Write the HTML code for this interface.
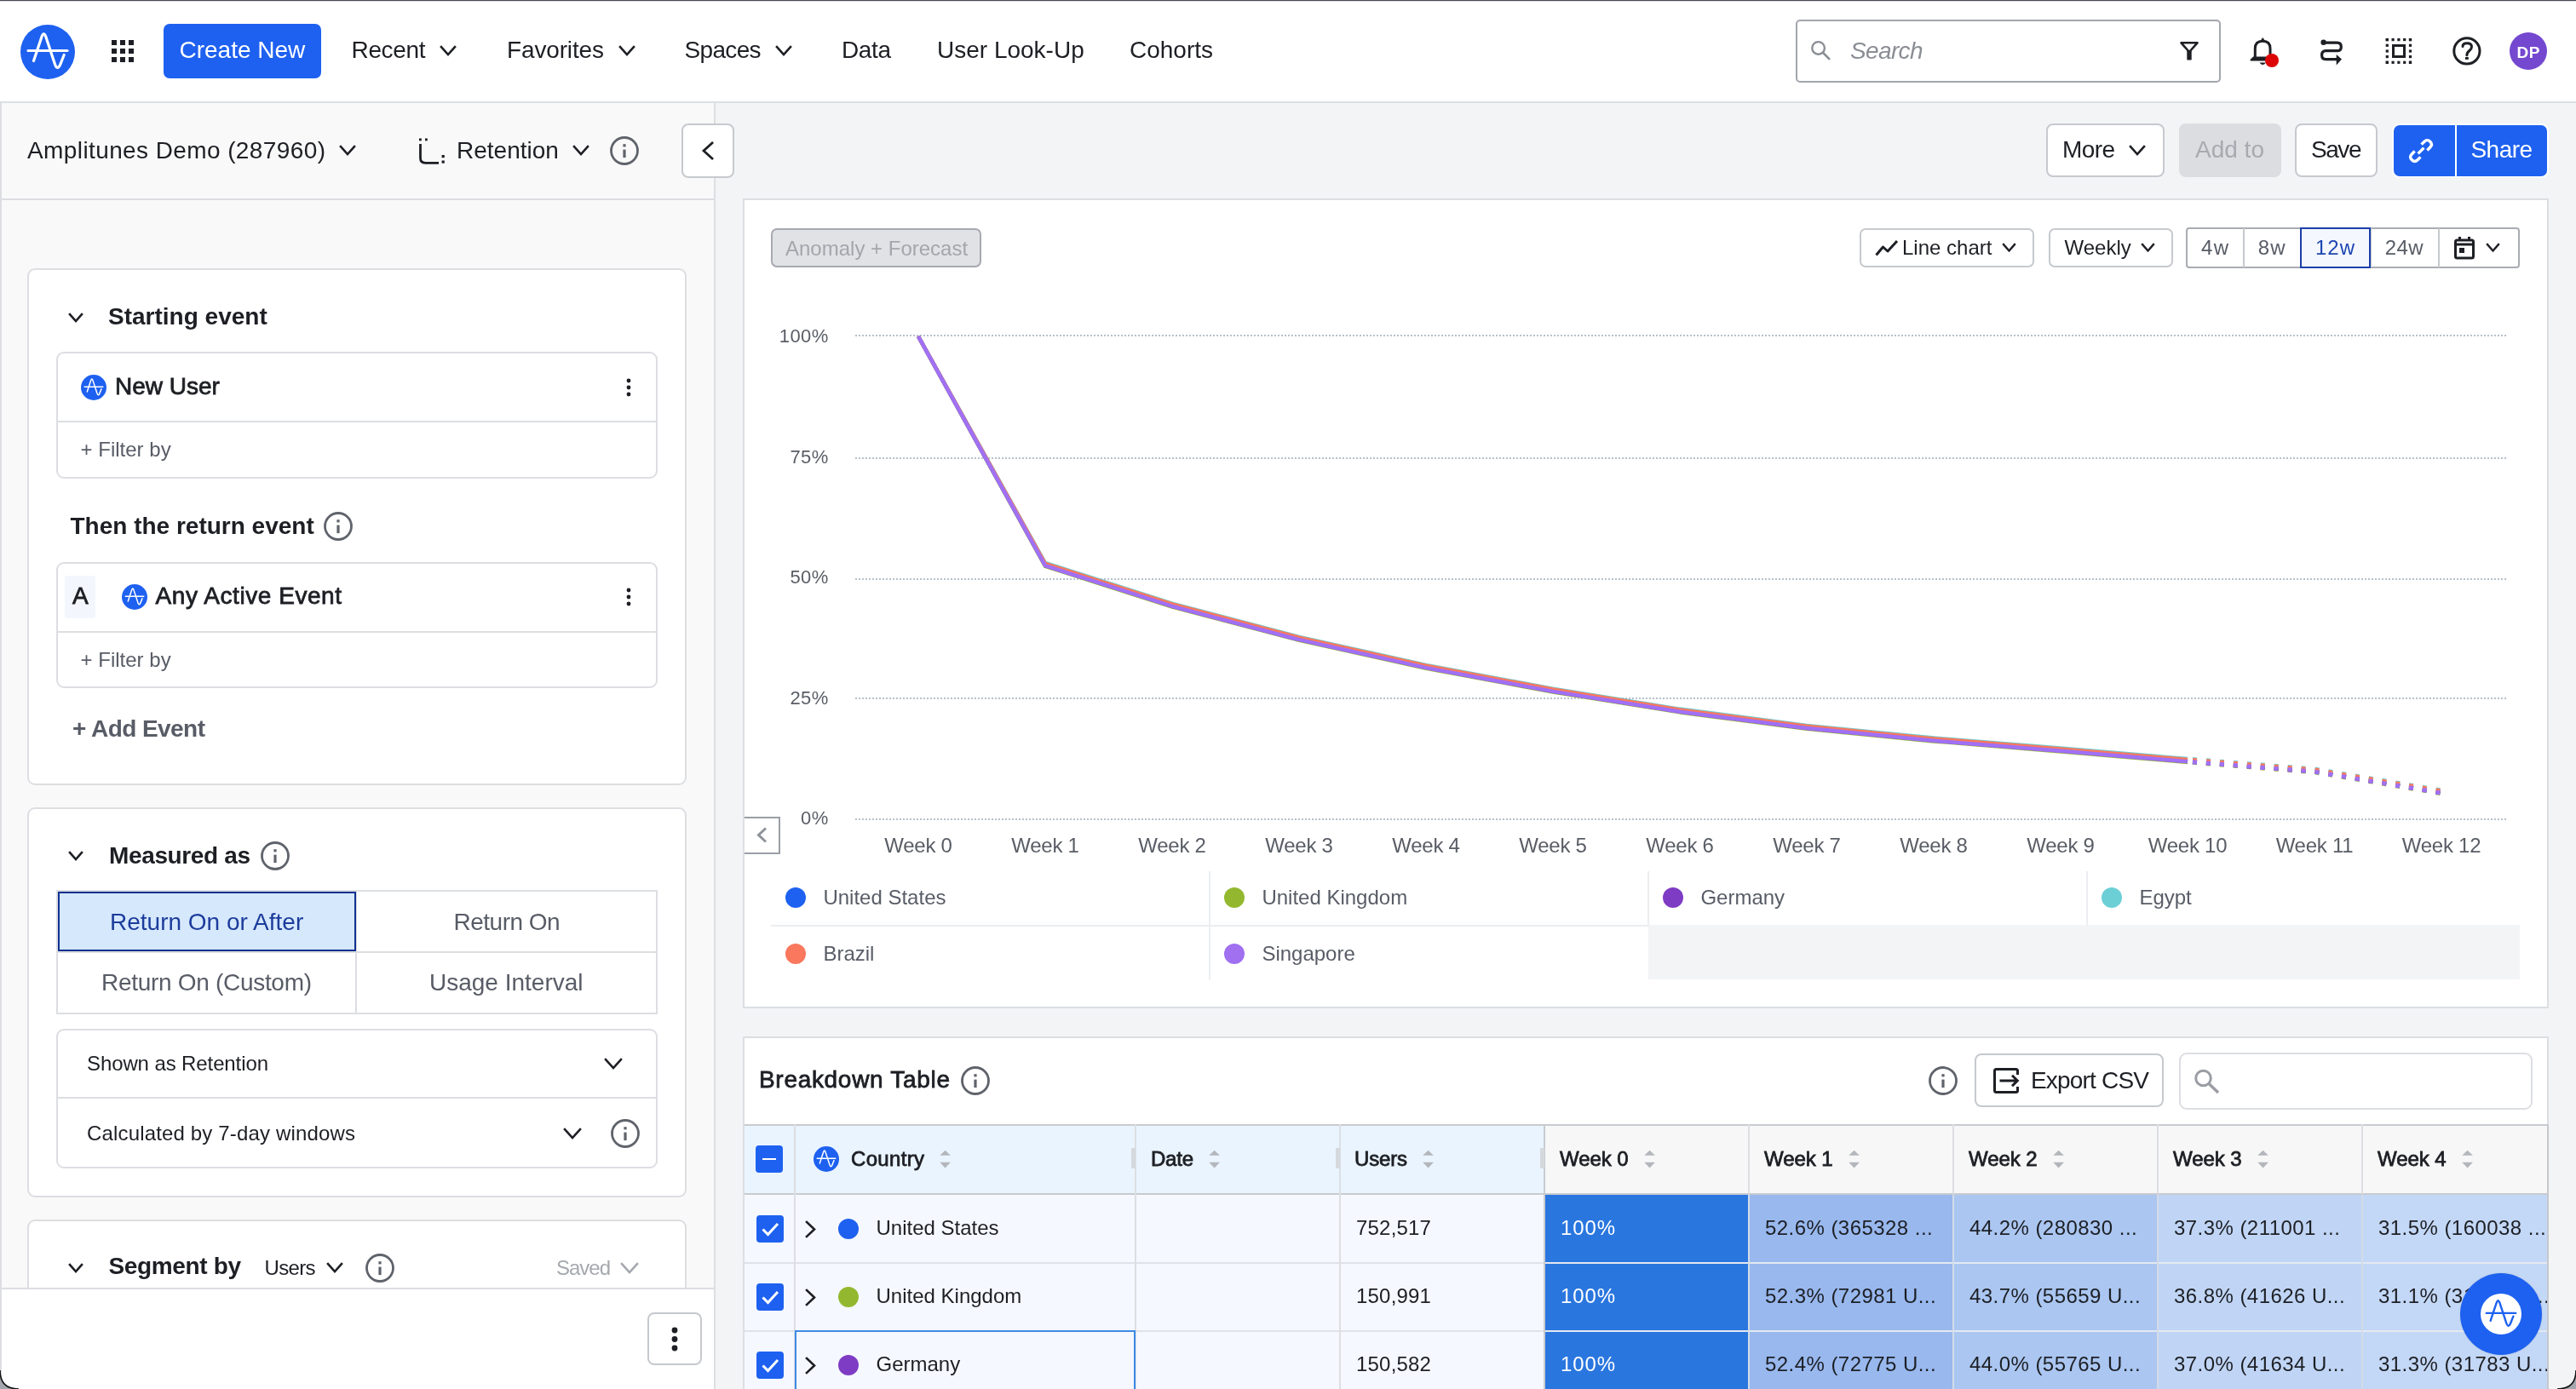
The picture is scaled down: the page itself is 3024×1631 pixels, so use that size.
<!DOCTYPE html><html><head><meta charset="utf-8"><style>
html,body{margin:0;padding:0;}
body{width:3024px;height:1631px;position:relative;overflow:hidden;background:#fff;font-family:"Liberation Sans", sans-serif;}
.t{position:absolute;line-height:1;white-space:nowrap;}
.m{-webkit-text-stroke:0.8px currentColor;}
svg{overflow:visible}
</style></head><body>
<div style="position:absolute;left:0;top:0;width:3024px;height:1631px;will-change:transform;">
<div style="position:absolute;left:0px;top:121px;width:838px;height:1510px;background:#f9f9f9;"></div>
<div style="position:absolute;left:840px;top:121px;width:2184px;height:1510px;background:#f3f4f6;"></div>
<div style="position:absolute;left:838px;top:121px;width:2px;height:1510px;background:#dcdee2;"></div>
<div style="position:absolute;left:0px;top:121px;width:2px;height:1510px;background:#dcdee2;"></div>
<div style="position:absolute;left:0px;top:233px;width:838px;height:2px;background:#dcdee2;"></div>
<div style="position:absolute;left:0px;top:0px;width:3024px;height:1px;background:#454857;"></div>
<div style="position:absolute;left:0px;top:1px;width:3024px;height:1px;background:#dcdde1;"></div>
<div style="position:absolute;left:0px;top:119px;width:3024px;height:2px;background:#dcdee2;"></div>
<svg style="position:absolute;left:24.0px;top:29.0px;" width="64" height="64" viewBox="0 0 64 64"><circle cx="32" cy="32" r="32" fill="#1e61f0"/><path d="M9 30.5 H55" stroke="#fff" stroke-width="3.2" fill="none" stroke-linecap="round"/><path d="M15.5 42.5 L25.2 13.5 Q27.3 8.2 29.6 13.6 L40.6 46.8 Q43.6 54.2 46.8 46.6 L51.2 35.5" stroke="#fff" stroke-width="3.2" fill="none" stroke-linecap="round" stroke-linejoin="round"/></svg>
<div style="position:absolute;left:131px;top:47px;width:6px;height:6px;background:#1d1f24;"></div>
<div style="position:absolute;left:131px;top:57px;width:6px;height:6px;background:#1d1f24;"></div>
<div style="position:absolute;left:131px;top:67px;width:6px;height:6px;background:#1d1f24;"></div>
<div style="position:absolute;left:141px;top:47px;width:6px;height:6px;background:#1d1f24;"></div>
<div style="position:absolute;left:141px;top:57px;width:6px;height:6px;background:#1d1f24;"></div>
<div style="position:absolute;left:141px;top:67px;width:6px;height:6px;background:#1d1f24;"></div>
<div style="position:absolute;left:151px;top:47px;width:6px;height:6px;background:#1d1f24;"></div>
<div style="position:absolute;left:151px;top:57px;width:6px;height:6px;background:#1d1f24;"></div>
<div style="position:absolute;left:151px;top:67px;width:6px;height:6px;background:#1d1f24;"></div>
<div style="position:absolute;left:192px;top:28px;width:185px;height:64px;background:#1e61f0;border-radius:7px;"></div>
<div class="t" style="left:210.5px;top:45.3px;font-size:28px;color:#fff;">Create New</div>
<div class="t" style="left:412.5px;top:45.3px;font-size:28px;color:#1d1f24;letter-spacing:-0.344px;">Recent</div>
<svg style="position:absolute;left:514.5px;top:52.2px;" width="22" height="15" viewBox="0 0 22 15"><polyline points="3,3 11.0,12 19,3" fill="none" stroke="#1d1f24" stroke-width="2.6" stroke-linecap="square"/></svg>
<div class="t" style="left:595.0px;top:45.3px;font-size:28px;color:#1d1f24;letter-spacing:-0.145px;">Favorites</div>
<svg style="position:absolute;left:724.6px;top:52.2px;" width="22" height="15" viewBox="0 0 22 15"><polyline points="3,3 11.0,12 19,3" fill="none" stroke="#1d1f24" stroke-width="2.6" stroke-linecap="square"/></svg>
<div class="t" style="left:803.6px;top:45.3px;font-size:28px;color:#1d1f24;letter-spacing:-0.681px;">Spaces</div>
<svg style="position:absolute;left:908.7px;top:52.2px;" width="22" height="15" viewBox="0 0 22 15"><polyline points="3,3 11.0,12 19,3" fill="none" stroke="#1d1f24" stroke-width="2.6" stroke-linecap="square"/></svg>
<div class="t" style="left:988.0px;top:45.3px;font-size:28px;color:#1d1f24;letter-spacing:-0.385px;">Data</div>
<div class="t" style="left:1100.0px;top:45.3px;font-size:28px;color:#1d1f24;">User Look-Up</div>
<div class="t" style="left:1326.0px;top:45.3px;font-size:28px;color:#1d1f24;">Cohorts</div>
<div style="position:absolute;left:2108px;top:23px;width:499px;height:74px;box-sizing:border-box;border:2px solid #a3a6ad;border-radius:5px;background:#fff;"></div>
<svg style="position:absolute;left:2110px;top:30px;" width="60" height="60" viewBox="2110 30 60 60"><circle cx="2134.6" cy="56.4" r="7.3" fill="none" stroke="#8a8d94" stroke-width="2.4"/><path d="M2140.2 62 L2148 69.8" stroke="#8a8d94" stroke-width="2.6"/></svg>
<div class="t" style="left:2172.0px;top:45.9px;font-size:28px;color:#8a8d94;font-style:italic;letter-spacing:-0.644px;">Search</div>
<svg style="position:absolute;left:2550px;top:40px;" width="40" height="40" viewBox="2550 40 40 40"><path d="M2560.5 50.3 H2579.5 L2570 61 Z" fill="none" stroke="#1d1f24" stroke-width="2.6" stroke-linejoin="round"/><rect x="2567.3" y="59.5" width="5.4" height="11" rx="0.8" fill="#1d1f24"/></svg>
<svg style="position:absolute;left:2635px;top:38px;" width="50" height="45" viewBox="2635 38 50 45"><path d="M2647.3 69.5 V57 Q2647.3 48.2 2656.2 48.2 Q2665 48.2 2665 57 V69.5" fill="none" stroke="#1d1f24" stroke-width="3"/><path d="M2642.5 70.5 L2645.5 67.5 H2667 L2670 70.5 Z" fill="#1d1f24" stroke="#1d1f24" stroke-width="2" stroke-linejoin="round"/><path d="M2652.5 73.5 Q2656.2 78.5 2660 73.5 Z" fill="#1d1f24"/><path d="M2653.5 48 L2656.2 44 L2659 48 Z" fill="#1d1f24"/></svg>
<div style="position:absolute;left:2659px;top:63px;width:16px;height:16px;background:#dd0606;border-radius:50%;"></div>
<svg style="position:absolute;left:2715px;top:40px;" width="45" height="42" viewBox="2715 40 45 42"><circle cx="2727.6" cy="49.8" r="3.2" fill="#1d1f24"/><path d="M2727.6 50.1 H2743.6 Q2748.3 50.1 2748.3 54.9 Q2748.3 59.7 2743.6 59.7 H2730.4 Q2725.6 59.7 2725.6 64.7 Q2725.6 69.6 2730.4 69.6 H2744" fill="none" stroke="#1d1f24" stroke-width="3.2"/><path d="M2742.7 64 L2749 69.6 L2742.7 76.5 Z" fill="#1d1f24"/></svg>
<svg style="position:absolute;left:2795px;top:40px;" width="42" height="42" viewBox="2795 40 42 42"><rect x="2800.7" y="45.0" width="3.2" height="3.2" fill="#1d1f24"/><rect x="2800.7" y="71.7" width="3.2" height="3.2" fill="#1d1f24"/><rect x="2800.7" y="45.0" width="3.2" height="3.2" fill="#1d1f24"/><rect x="2827.9" y="45.0" width="3.2" height="3.2" fill="#1d1f24"/><rect x="2807.5" y="45.0" width="3.2" height="3.2" fill="#1d1f24"/><rect x="2807.5" y="71.7" width="3.2" height="3.2" fill="#1d1f24"/><rect x="2800.7" y="51.7" width="3.2" height="3.2" fill="#1d1f24"/><rect x="2827.9" y="51.7" width="3.2" height="3.2" fill="#1d1f24"/><rect x="2814.3" y="45.0" width="3.2" height="3.2" fill="#1d1f24"/><rect x="2814.3" y="71.7" width="3.2" height="3.2" fill="#1d1f24"/><rect x="2800.7" y="58.4" width="3.2" height="3.2" fill="#1d1f24"/><rect x="2827.9" y="58.4" width="3.2" height="3.2" fill="#1d1f24"/><rect x="2821.1" y="45.0" width="3.2" height="3.2" fill="#1d1f24"/><rect x="2821.1" y="71.7" width="3.2" height="3.2" fill="#1d1f24"/><rect x="2800.7" y="65.0" width="3.2" height="3.2" fill="#1d1f24"/><rect x="2827.9" y="65.0" width="3.2" height="3.2" fill="#1d1f24"/><rect x="2827.9" y="45.0" width="3.2" height="3.2" fill="#1d1f24"/><rect x="2827.9" y="71.7" width="3.2" height="3.2" fill="#1d1f24"/><rect x="2800.7" y="71.7" width="3.2" height="3.2" fill="#1d1f24"/><rect x="2827.9" y="71.7" width="3.2" height="3.2" fill="#1d1f24"/><rect x="2809.5" y="53.5" width="13" height="13" fill="none" stroke="#1d1f24" stroke-width="3"/></svg>
<svg style="position:absolute;left:2875px;top:38px;" width="42" height="42" viewBox="2875 38 42 42"><circle cx="2895.9" cy="59.9" r="15.1" fill="none" stroke="#1d1f24" stroke-width="3"/><path d="M2891 54.5 Q2891 50.7 2896.2 50.7 Q2901.5 50.7 2901.5 55 Q2901.5 57.3 2898.8 59.5 Q2895.9 61.8 2895.9 64.8" fill="none" stroke="#1d1f24" stroke-width="3" stroke-linecap="round"/><rect x="2894" y="67" width="3.8" height="2.9" fill="#1d1f24"/></svg>
<div style="position:absolute;left:2946px;top:38px;width:44px;height:44px;background:#7448cf;border-radius:50%;"></div>
<div class="t" style="left:2968.3px;transform:translateX(-50%);top:51.7px;font-size:19px;color:#fff;font-weight:700;letter-spacing:0.5px;">DP</div>
<div class="t" style="left:32.0px;top:162.9px;font-size:28px;color:#1d1f24;letter-spacing:0.398px;">Amplitunes Demo (287960)</div>
<svg style="position:absolute;left:396.5px;top:168.5px;" width="22" height="15" viewBox="0 0 22 15"><polyline points="3,3 11.0,12 19,3" fill="none" stroke="#1d1f24" stroke-width="2.6" stroke-linecap="square"/></svg>
<svg style="position:absolute;left:485px;top:155px;" width="45" height="45" viewBox="485 155 45 45"><rect x="492" y="162.5" width="2.8" height="2.8" fill="#1d1f24"/><rect x="499" y="162.5" width="2.8" height="2.8" fill="#1d1f24"/><path d="M493.5 169 V185.5 Q493.5 191.3 499.3 191.3 H515" fill="none" stroke="#1d1f24" stroke-width="2.8"/><rect x="518.6" y="182" width="3.2" height="3.2" fill="#1d1f24"/><rect x="518.6" y="188.5" width="3.2" height="3.2" fill="#1d1f24"/></svg>
<div class="t" style="left:536.0px;top:162.9px;font-size:28px;color:#1d1f24;">Retention</div>
<svg style="position:absolute;left:670.5px;top:168.5px;" width="22" height="15" viewBox="0 0 22 15"><polyline points="3,3 11.0,12 19,3" fill="none" stroke="#1d1f24" stroke-width="2.6" stroke-linecap="square"/></svg>
<svg style="position:absolute;left:716.0px;top:159.8px;" width="34" height="34" viewBox="0 0 34 34"><circle cx="17.0" cy="17.0" r="15.5" fill="none" stroke="#5f636b" stroke-width="2.8"/><rect x="15.4" y="9.2" width="3.2" height="3.2" fill="#5f636b"/><rect x="15.4" y="15.6" width="3.2" height="9.5" fill="#5f636b"/></svg>
<div style="position:absolute;left:800px;top:145px;width:62px;height:64px;box-sizing:border-box;border:2px solid #c6c9ce;border-radius:8px;background:#fff;"></div>
<svg style="position:absolute;left:822.5px;top:164.5px;" width="16" height="24" viewBox="0 0 16 24"><polyline points="13,3 3,12.0 13,21" fill="none" stroke="#1d1f24" stroke-width="2.8" stroke-linecap="square"/></svg>
<div style="position:absolute;left:2402px;top:145px;width:139px;height:63px;box-sizing:border-box;border:2px solid #c6c9ce;border-radius:8px;background:#fff;"></div>
<div class="t" style="left:2421.0px;top:162.3px;font-size:28px;color:#1d1f24;letter-spacing:-0.599px;">More</div>
<svg style="position:absolute;left:2497.5px;top:168.5px;" width="22" height="15" viewBox="0 0 22 15"><polyline points="3,3 11.0,12 19,3" fill="none" stroke="#1d1f24" stroke-width="2.6" stroke-linecap="square"/></svg>
<div style="position:absolute;left:2558px;top:145px;width:120px;height:63px;background:#dcdde1;border-radius:8px;"></div>
<div class="t" style="left:2577.0px;top:162.3px;font-size:28px;color:#a7aab0;">Add to</div>
<div style="position:absolute;left:2694px;top:145px;width:97px;height:63px;box-sizing:border-box;border:2px solid #c6c9ce;border-radius:8px;background:#fff;"></div>
<div class="t" style="left:2713.0px;top:162.3px;font-size:28px;color:#1d1f24;letter-spacing:-1.443px;">Save</div>
<div style="position:absolute;left:2808px;top:145px;width:184px;height:64px;background:#fff;border-radius:9px;"></div>
<div style="position:absolute;left:2810px;top:147px;width:180px;height:60px;background:#1e61f0;border-radius:7px;"></div>
<div style="position:absolute;left:2882px;top:147px;width:2px;height:60px;background:#fff;"></div>
<svg style="position:absolute;left:2824px;top:158.5px;" width="36" height="36" viewBox="0 0 36 36"><g transform="translate(18 18) scale(1.13) translate(-16 -16)"><path d="M13 19 L19 13" stroke="#fff" stroke-width="3" stroke-linecap="butt"/><path d="M16.5 9.5 L19.5 6.5 Q22.5 3.5 25.5 6.5 Q28.5 9.5 25.5 12.5 L22.5 15.5" fill="none" stroke="#fff" stroke-width="3" stroke-linecap="butt"/><path d="M15.5 22.5 L12.5 25.5 Q9.5 28.5 6.5 25.5 Q3.5 22.5 6.5 19.5 L9.5 16.5" fill="none" stroke="#fff" stroke-width="3" stroke-linecap="butt"/></g></svg>
<div class="t" style="left:2900.5px;top:162.3px;font-size:28px;color:#fff;letter-spacing:-0.555px;">Share</div>
<div style="position:absolute;left:32px;top:315px;width:774px;height:607px;box-sizing:border-box;border:2px solid #dcdee2;border-radius:9px;background:#fff;"></div>
<svg style="position:absolute;left:78.5px;top:365.5px;" width="20" height="14" viewBox="0 0 20 14"><polyline points="3,3 10.0,11 17,3" fill="none" stroke="#1d1f24" stroke-width="2.6" stroke-linecap="square"/></svg>
<div class="t" style="left:127.0px;top:358.3px;font-size:28px;color:#1d1f24;font-weight:700;">Starting event</div>
<div style="position:absolute;left:66px;top:413px;width:706px;height:149px;box-sizing:border-box;border:2px solid #dcdee2;border-radius:9px;background:#fff;"></div>
<div style="position:absolute;left:68px;top:494px;width:702px;height:2px;background:#dcdee2;"></div>
<svg style="position:absolute;left:95.0px;top:440.0px;" width="30" height="30" viewBox="0 0 64 64"><circle cx="32" cy="32" r="32" fill="#1e61f0"/><path d="M9 30.5 H55" stroke="#fff" stroke-width="3.2" fill="none" stroke-linecap="round"/><path d="M15.5 42.5 L25.2 13.5 Q27.3 8.2 29.6 13.6 L40.6 46.8 Q43.6 54.2 46.8 46.6 L51.2 35.5" stroke="#fff" stroke-width="3.2" fill="none" stroke-linecap="round" stroke-linejoin="round"/></svg>
<div class="t m" style="left:135.0px;top:439.9px;font-size:28px;color:#1d1f24;">New User</div>
<svg style="position:absolute;left:732.1px;top:440.8px;" width="12" height="28" viewBox="0 0 12 28"><circle cx="6" cy="6" r="2.4" fill="#1d1f24"/><circle cx="6" cy="14" r="2.4" fill="#1d1f24"/><circle cx="6" cy="22" r="2.4" fill="#1d1f24"/></svg>
<div class="t" style="left:94.6px;top:516.2px;font-size:24px;color:#585c66;">+ Filter by</div>
<div class="t" style="left:82.5px;top:604.3px;font-size:28px;color:#1d1f24;font-weight:700;">Then the return event</div>
<svg style="position:absolute;left:380.0px;top:601.0px;" width="34" height="34" viewBox="0 0 34 34"><circle cx="17.0" cy="17.0" r="15.5" fill="none" stroke="#5f636b" stroke-width="2.8"/><rect x="15.4" y="9.2" width="3.2" height="3.2" fill="#5f636b"/><rect x="15.4" y="15.6" width="3.2" height="9.5" fill="#5f636b"/></svg>
<div style="position:absolute;left:66px;top:660px;width:706px;height:148px;box-sizing:border-box;border:2px solid #dcdee2;border-radius:9px;background:#fff;"></div>
<div style="position:absolute;left:68px;top:741px;width:702px;height:2px;background:#dcdee2;"></div>
<div style="position:absolute;left:76px;top:676px;width:36px;height:50px;background:#f3f7fd;border-radius:3px;"></div>
<div class="t m" style="left:85.0px;top:686.3px;font-size:28px;color:#1d1f24;">A</div>
<svg style="position:absolute;left:143.0px;top:686.0px;" width="30" height="30" viewBox="0 0 64 64"><circle cx="32" cy="32" r="32" fill="#1e61f0"/><path d="M9 30.5 H55" stroke="#fff" stroke-width="3.2" fill="none" stroke-linecap="round"/><path d="M15.5 42.5 L25.2 13.5 Q27.3 8.2 29.6 13.6 L40.6 46.8 Q43.6 54.2 46.8 46.6 L51.2 35.5" stroke="#fff" stroke-width="3.2" fill="none" stroke-linecap="round" stroke-linejoin="round"/></svg>
<div class="t m" style="left:182.6px;top:686.3px;font-size:28px;color:#1d1f24;letter-spacing:0.553px;">Any Active Event</div>
<svg style="position:absolute;left:732.1px;top:687px;" width="12" height="28" viewBox="0 0 12 28"><circle cx="6" cy="6" r="2.4" fill="#1d1f24"/><circle cx="6" cy="14" r="2.4" fill="#1d1f24"/><circle cx="6" cy="22" r="2.4" fill="#1d1f24"/></svg>
<div class="t" style="left:94.6px;top:762.7px;font-size:24px;color:#585c66;">+ Filter by</div>
<div class="t" style="left:85.0px;top:842.3px;font-size:28px;color:#585c66;font-weight:700;letter-spacing:-0.555px;">+ Add Event</div>
<div style="position:absolute;left:32px;top:948px;width:774px;height:458px;box-sizing:border-box;border:2px solid #dcdee2;border-radius:9px;background:#fff;"></div>
<svg style="position:absolute;left:78.5px;top:998.0px;" width="20" height="14" viewBox="0 0 20 14"><polyline points="3,3 10.0,11 17,3" fill="none" stroke="#1d1f24" stroke-width="2.6" stroke-linecap="square"/></svg>
<div class="t" style="left:128.0px;top:990.8px;font-size:28px;color:#1d1f24;font-weight:700;letter-spacing:-0.364px;">Measured as</div>
<svg style="position:absolute;left:305.7px;top:987.6px;" width="34" height="34" viewBox="0 0 34 34"><circle cx="17.0" cy="17.0" r="15.5" fill="none" stroke="#5f636b" stroke-width="2.8"/><rect x="15.4" y="9.2" width="3.2" height="3.2" fill="#5f636b"/><rect x="15.4" y="15.6" width="3.2" height="9.5" fill="#5f636b"/></svg>
<div style="position:absolute;left:66px;top:1045px;width:706px;height:146px;box-sizing:border-box;border:2px solid #dcdee2;background:#fff;"></div>
<div style="position:absolute;left:417px;top:1045px;width:2px;height:146px;background:#dcdee2;"></div>
<div style="position:absolute;left:66px;top:1117px;width:706px;height:2px;background:#dcdee2;"></div>
<div style="position:absolute;left:68px;top:1047px;width:350px;height:70px;box-sizing:border-box;border:2px solid #10318f;background:#d6e8fc;"></div>
<div class="t" style="left:129.0px;top:1068.7px;font-size:28px;color:#1c3c9c;">Return On or After</div>
<div class="t" style="left:532.6px;top:1068.7px;font-size:28px;color:#585c66;letter-spacing:-0.521px;">Return On</div>
<div class="t" style="left:119.0px;top:1140.3px;font-size:28px;color:#585c66;letter-spacing:-0.299px;">Return On (Custom)</div>
<div class="t" style="left:504.0px;top:1140.3px;font-size:28px;color:#585c66;">Usage Interval</div>
<div style="position:absolute;left:66px;top:1208px;width:706px;height:164px;box-sizing:border-box;border:2px solid #dcdee2;border-radius:9px;background:#fff;"></div>
<div style="position:absolute;left:68px;top:1288px;width:702px;height:2px;background:#dcdee2;"></div>
<div class="t" style="left:102.0px;top:1236.7px;font-size:24px;color:#1d1f24;letter-spacing:-0.107px;">Shown as Retention</div>
<svg style="position:absolute;left:708.0px;top:1241.0px;" width="24" height="16" viewBox="0 0 24 16"><polyline points="3,3 12.0,13 21,3" fill="none" stroke="#1d1f24" stroke-width="2.6" stroke-linecap="square"/></svg>
<div class="t" style="left:102.0px;top:1318.7px;font-size:24px;color:#1d1f24;letter-spacing:0.160px;">Calculated by 7-day windows</div>
<svg style="position:absolute;left:660.0px;top:1323.0px;" width="24" height="16" viewBox="0 0 24 16"><polyline points="3,3 12.0,13 21,3" fill="none" stroke="#1d1f24" stroke-width="2.6" stroke-linecap="square"/></svg>
<svg style="position:absolute;left:716.5px;top:1314.0px;" width="34" height="34" viewBox="0 0 34 34"><circle cx="17.0" cy="17.0" r="15.5" fill="none" stroke="#5f636b" stroke-width="2.8"/><rect x="15.4" y="9.2" width="3.2" height="3.2" fill="#5f636b"/><rect x="15.4" y="15.6" width="3.2" height="9.5" fill="#5f636b"/></svg>
<div style="position:absolute;left:32px;top:1432px;width:774px;height:200px;box-sizing:border-box;border:2px solid #dcdee2;border-radius:9px;background:#fff;"></div>
<svg style="position:absolute;left:78.5px;top:1481.5px;" width="20" height="14" viewBox="0 0 20 14"><polyline points="3,3 10.0,11 17,3" fill="none" stroke="#1d1f24" stroke-width="2.6" stroke-linecap="square"/></svg>
<div class="t" style="left:127.5px;top:1473.3px;font-size:28px;color:#1d1f24;font-weight:700;letter-spacing:-0.356px;">Segment by</div>
<div class="t" style="left:310.5px;top:1476.7px;font-size:24px;color:#1d1f24;letter-spacing:-0.668px;">Users</div>
<svg style="position:absolute;left:382.0px;top:1481.0px;" width="22" height="15" viewBox="0 0 22 15"><polyline points="3,3 11.0,12 19,3" fill="none" stroke="#1d1f24" stroke-width="2.6" stroke-linecap="square"/></svg>
<svg style="position:absolute;left:429.0px;top:1471.5px;" width="34" height="34" viewBox="0 0 34 34"><circle cx="17.0" cy="17.0" r="15.5" fill="none" stroke="#5f636b" stroke-width="2.8"/><rect x="15.4" y="9.2" width="3.2" height="3.2" fill="#5f636b"/><rect x="15.4" y="15.6" width="3.2" height="9.5" fill="#5f636b"/></svg>
<div class="t" style="left:653.0px;top:1476.7px;font-size:24px;color:#a5a8ae;letter-spacing:-1.016px;">Saved</div>
<svg style="position:absolute;left:726.7px;top:1480.5px;" width="24" height="16" viewBox="0 0 24 16"><polyline points="3,3 12.0,13 21,3" fill="none" stroke="#a5a8ae" stroke-width="2.6" stroke-linecap="square"/></svg>
<div style="position:absolute;left:2px;top:1512px;width:836px;height:119px;background:#fff;border-top:2px solid #dcdee2;"></div>
<div style="position:absolute;left:760px;top:1541px;width:64px;height:62px;box-sizing:border-box;border:2px solid #c6c9ce;border-radius:8px;background:#fff;"></div>
<svg style="position:absolute;left:786px;top:1556.0px;" width="12" height="33.0" viewBox="0 0 12 33.0"><circle cx="6" cy="6.0" r="3.4" fill="#1d1f24"/><circle cx="6" cy="16.5" r="3.4" fill="#1d1f24"/><circle cx="6" cy="27.0" r="3.4" fill="#1d1f24"/></svg>
<div style="position:absolute;left:872px;top:233px;width:2120px;height:951px;box-sizing:border-box;border:2px solid #dcdee2;background:#fff;"></div>
<div style="position:absolute;left:905px;top:268px;width:247px;height:46px;box-sizing:border-box;border:2px solid #a6a9af;border-radius:7px;background:#e1e2e6;"></div>
<div class="t" style="left:922.0px;top:279.7px;font-size:24px;color:#a3a6ac;">Anomaly + Forecast</div>
<div style="position:absolute;left:2183px;top:268px;width:205px;height:46px;box-sizing:border-box;border:2px solid #c6c9ce;border-radius:7px;background:#fff;"></div>
<svg style="position:absolute;left:2200px;top:280px;" width="30" height="22" viewBox="0 0 30 22"><polyline points="2.5,19.5 10.5,10 16,15 27,3" fill="none" stroke="#1d1f24" stroke-width="3" stroke-linejoin="round"/></svg>
<div class="t" style="left:2233.0px;top:278.7px;font-size:24px;color:#1d1f24;">Line chart</div>
<svg style="position:absolute;left:2348.5px;top:284.25px;" width="19" height="13.5" viewBox="0 0 19 13.5"><polyline points="3,3 9.5,10.5 16,3" fill="none" stroke="#1d1f24" stroke-width="2.4" stroke-linecap="square"/></svg>
<div style="position:absolute;left:2405px;top:268px;width:146px;height:46px;box-sizing:border-box;border:2px solid #c6c9ce;border-radius:7px;background:#fff;"></div>
<div class="t" style="left:2423.5px;top:278.7px;font-size:24px;color:#1d1f24;">Weekly</div>
<svg style="position:absolute;left:2511.5px;top:284.25px;" width="19" height="13.5" viewBox="0 0 19 13.5"><polyline points="3,3 9.5,10.5 16,3" fill="none" stroke="#1d1f24" stroke-width="2.4" stroke-linecap="square"/></svg>
<div style="position:absolute;left:2566px;top:267px;width:392px;height:48px;box-sizing:border-box;border:2px solid #a9acb2;border-radius:4px;background:#fff;"></div>
<div style="position:absolute;left:2633px;top:268px;width:2px;height:46px;background:#c6c9ce;"></div>
<div style="position:absolute;left:2782px;top:268px;width:2px;height:46px;background:#c6c9ce;"></div>
<div style="position:absolute;left:2862px;top:268px;width:2px;height:46px;background:#c6c9ce;"></div>
<div style="position:absolute;left:2700px;top:267px;width:83px;height:48px;box-sizing:border-box;border:2px solid #1c3fa8;background:#f4f7fe;"></div>
<div class="t" style="left:2584.0px;top:278.7px;font-size:24px;color:#585c66;letter-spacing:1.312px;">4w</div>
<div class="t" style="left:2650.7px;top:278.7px;font-size:24px;color:#585c66;letter-spacing:1.312px;">8w</div>
<div class="t" style="left:2718.0px;top:278.7px;font-size:24px;color:#1d46b0;letter-spacing:0.984px;">12w</div>
<div class="t" style="left:2799.7px;top:278.7px;font-size:24px;color:#585c66;letter-spacing:0.484px;">24w</div>
<svg style="position:absolute;left:2880px;top:276px;" width="28" height="30" viewBox="0 0 28 30"><rect x="2.5" y="6" width="21" height="21" rx="2" fill="none" stroke="#1d1f24" stroke-width="3"/><path d="M2.5 11 H23.5" stroke="#1d1f24" stroke-width="3"/><path d="M7.5 2 V7 M18.5 2 V7" stroke="#1d1f24" stroke-width="3"/><rect x="7" y="15" width="6" height="6" fill="#1d1f24"/></svg>
<svg style="position:absolute;left:2916.5px;top:284.25px;" width="19" height="13.5" viewBox="0 0 19 13.5"><polyline points="3,3 9.5,10.5 16,3" fill="none" stroke="#1d1f24" stroke-width="2.4" stroke-linecap="square"/></svg>
<div class="t" style="right:2051.3px;top:384.1px;font-size:22px;color:#595d65;letter-spacing:0.4px;">100%</div>
<div class="t" style="right:2051.3px;top:525.6px;font-size:22px;color:#595d65;letter-spacing:0.4px;">75%</div>
<div class="t" style="right:2051.3px;top:667.1px;font-size:22px;color:#595d65;letter-spacing:0.4px;">50%</div>
<div class="t" style="right:2051.3px;top:808.6px;font-size:22px;color:#595d65;letter-spacing:0.4px;">25%</div>
<div class="t" style="right:2051.3px;top:950.1px;font-size:22px;color:#595d65;letter-spacing:0.4px;">0%</div>
<svg style="position:absolute;left:1000px;top:390px;" width="1950" height="580" viewBox="1000 390 1950 580"><line x1="1004" y1="394" x2="2942" y2="394" stroke="#b6c1cc" stroke-width="2" stroke-dasharray="2 2"/><line x1="1004" y1="538" x2="2942" y2="538" stroke="#b6c1cc" stroke-width="2" stroke-dasharray="2 2"/><line x1="1004" y1="680" x2="2942" y2="680" stroke="#b6c1cc" stroke-width="2" stroke-dasharray="2 2"/><line x1="1004" y1="820" x2="2942" y2="820" stroke="#b6c1cc" stroke-width="2" stroke-dasharray="2 2"/><line x1="1004" y1="962" x2="2942" y2="962" stroke="#b6c1cc" stroke-width="2" stroke-dasharray="2 2"/></svg>
<div class="t" style="left:1078.0px;transform:translateX(-50%);top:980.5px;font-size:24px;color:#595d65;letter-spacing:-0.25px;">Week 0</div>
<div class="t" style="left:1227.0px;transform:translateX(-50%);top:980.5px;font-size:24px;color:#595d65;letter-spacing:-0.25px;">Week 1</div>
<div class="t" style="left:1376.0px;transform:translateX(-50%);top:980.5px;font-size:24px;color:#595d65;letter-spacing:-0.25px;">Week 2</div>
<div class="t" style="left:1525.0px;transform:translateX(-50%);top:980.5px;font-size:24px;color:#595d65;letter-spacing:-0.25px;">Week 3</div>
<div class="t" style="left:1674.0px;transform:translateX(-50%);top:980.5px;font-size:24px;color:#595d65;letter-spacing:-0.25px;">Week 4</div>
<div class="t" style="left:1823.0px;transform:translateX(-50%);top:980.5px;font-size:24px;color:#595d65;letter-spacing:-0.25px;">Week 5</div>
<div class="t" style="left:1972.0px;transform:translateX(-50%);top:980.5px;font-size:24px;color:#595d65;letter-spacing:-0.25px;">Week 6</div>
<div class="t" style="left:2121.0px;transform:translateX(-50%);top:980.5px;font-size:24px;color:#595d65;letter-spacing:-0.25px;">Week 7</div>
<div class="t" style="left:2270.0px;transform:translateX(-50%);top:980.5px;font-size:24px;color:#595d65;letter-spacing:-0.25px;">Week 8</div>
<div class="t" style="left:2419.0px;transform:translateX(-50%);top:980.5px;font-size:24px;color:#595d65;letter-spacing:-0.25px;">Week 9</div>
<div class="t" style="left:2568.0px;transform:translateX(-50%);top:980.5px;font-size:24px;color:#595d65;letter-spacing:-0.25px;">Week 10</div>
<div class="t" style="left:2717.0px;transform:translateX(-50%);top:980.5px;font-size:24px;color:#595d65;letter-spacing:-0.25px;">Week 11</div>
<div class="t" style="left:2866.0px;transform:translateX(-50%);top:980.5px;font-size:24px;color:#595d65;letter-spacing:-0.25px;">Week 12</div>
<svg style="position:absolute;left:1000px;top:350px;" width="1950" height="620" viewBox="1000 350 1950 620"><polyline points="1078.0,395.0 1227.0,664.0 1376.0,711.7 1525.0,750.9 1674.0,783.9 1823.0,811.7 1972.0,835.6 2121.0,854.9 2270.0,869.6 2419.0,881.6 2568.0,894.1" fill="none" stroke="#1e61f0" stroke-width="4.5" stroke-linejoin="round"/><polyline points="1078.0,395.0 1227.0,664.8 1376.0,712.5 1525.0,751.7 1674.0,784.7 1823.0,812.5 1972.0,836.4 2121.0,855.7 2270.0,870.4 2419.0,882.4 2568.0,894.9" fill="none" stroke="#93b82f" stroke-width="4.5" stroke-linejoin="round"/><polyline points="1078.0,395.0 1227.0,664.0 1376.0,711.7 1525.0,750.9 1674.0,783.9 1823.0,811.7 1972.0,835.6 2121.0,854.9 2270.0,869.6 2419.0,881.6 2568.0,894.1" fill="none" stroke="#7e3cc4" stroke-width="4.5" stroke-linejoin="round"/><polyline points="1078.0,395.0 1227.0,661.0 1376.0,708.7 1525.0,747.9 1674.0,780.9 1823.0,808.7 1972.0,832.6 2121.0,851.9 2270.0,866.6 2419.0,878.6 2568.0,891.1" fill="none" stroke="#6ccfd6" stroke-width="4.5" stroke-linejoin="round"/><polyline points="1078.0,395.0 1227.0,661.8 1376.0,709.5 1525.0,748.7 1674.0,781.7 1823.0,809.5 1972.0,833.4 2121.0,852.7 2270.0,867.4 2419.0,879.4 2568.0,891.9" fill="none" stroke="#f9785e" stroke-width="4.5" stroke-linejoin="round"/><polyline points="1078.0,395.0 1227.0,664.2 1376.0,711.9 1525.0,751.1 1674.0,784.1 1823.0,811.9 1972.0,835.8 2121.0,855.1 2270.0,869.8 2419.0,881.8 2568.0,894.3" fill="none" stroke="#a070f5" stroke-width="4.5" stroke-linejoin="round"/><polyline points="2568.0,894.1 2717.0,906.0 2866.0,931.0" fill="none" stroke="#1e61f0" stroke-width="5" stroke-dasharray="5 11" stroke-dashoffset="-6"/><polyline points="2568.0,894.9 2717.0,906.8 2866.0,931.8" fill="none" stroke="#93b82f" stroke-width="5" stroke-dasharray="5 11" stroke-dashoffset="-6"/><polyline points="2568.0,894.1 2717.0,906.0 2866.0,931.0" fill="none" stroke="#7e3cc4" stroke-width="5" stroke-dasharray="5 11" stroke-dashoffset="-6"/><polyline points="2568.0,891.1 2717.0,903.0 2866.0,928.0" fill="none" stroke="#6ccfd6" stroke-width="5" stroke-dasharray="5 11" stroke-dashoffset="-6"/><polyline points="2568.0,891.9 2717.0,903.8 2866.0,928.8" fill="none" stroke="#f9785e" stroke-width="5" stroke-dasharray="5 11" stroke-dashoffset="-6"/><polyline points="2568.0,894.3 2717.0,906.2 2866.0,931.2" fill="none" stroke="#a070f5" stroke-width="5" stroke-dasharray="5 11" stroke-dashoffset="-6"/></svg>
<div style="position:absolute;left:874px;top:959px;width:42px;height:44px;box-sizing:border-box;border:2px solid #9a9ea6;border-left:none;background:#fff;"></div>
<svg style="position:absolute;left:880px;top:965px;" width="30" height="30" viewBox="880 965 30 30"><polyline points="899,972.5 890.5,980.5 899,988.5" fill="none" stroke="#8e9299" stroke-width="3"/></svg>
<div style="position:absolute;left:1935px;top:1086px;width:1023px;height:64px;background:#f3f4f6;"></div>
<div style="position:absolute;left:905px;top:1086px;width:1030px;height:2px;background:#eceef1;"></div>
<div style="position:absolute;left:1419px;top:1023px;width:2px;height:64px;background:#eceef1;"></div>
<div style="position:absolute;left:1934px;top:1023px;width:2px;height:64px;background:#eceef1;"></div>
<div style="position:absolute;left:2449px;top:1023px;width:2px;height:64px;background:#eceef1;"></div>
<div style="position:absolute;left:1419px;top:1087px;width:2px;height:64px;background:#eceef1;"></div>
<div style="position:absolute;left:922px;top:1042px;width:24px;height:24px;background:#1e61f0;border-radius:50%;"></div>
<div class="t" style="left:966.4px;top:1042.2px;font-size:24px;color:#585c66;">United States</div>
<div style="position:absolute;left:1437px;top:1042px;width:24px;height:24px;background:#93b82f;border-radius:50%;"></div>
<div class="t" style="left:1481.4px;top:1042.2px;font-size:24px;color:#585c66;">United Kingdom</div>
<div style="position:absolute;left:1952px;top:1042px;width:24px;height:24px;background:#7e3cc4;border-radius:50%;"></div>
<div class="t" style="left:1996.4px;top:1042.2px;font-size:24px;color:#585c66;">Germany</div>
<div style="position:absolute;left:2467px;top:1042px;width:24px;height:24px;background:#6ccfd6;border-radius:50%;"></div>
<div class="t" style="left:2511.4px;top:1042.2px;font-size:24px;color:#585c66;">Egypt</div>
<div style="position:absolute;left:922px;top:1108px;width:24px;height:24px;background:#f9785e;border-radius:50%;"></div>
<div class="t" style="left:966.4px;top:1108.2px;font-size:24px;color:#585c66;">Brazil</div>
<div style="position:absolute;left:1437px;top:1108px;width:24px;height:24px;background:#a070f0;border-radius:50%;"></div>
<div class="t" style="left:1481.4px;top:1108.2px;font-size:24px;color:#585c66;">Singapore</div>
<div style="position:absolute;left:872px;top:1217px;width:2120px;height:450px;box-sizing:border-box;border:2px solid #dcdee2;background:#fff;"></div>
<div class="t m" style="left:891.0px;top:1254.3px;font-size:28px;color:#1d1f24;letter-spacing:0.693px;">Breakdown Table</div>
<svg style="position:absolute;left:1128.0px;top:1252.0px;" width="34" height="34" viewBox="0 0 34 34"><circle cx="17.0" cy="17.0" r="15.5" fill="none" stroke="#5f636b" stroke-width="2.8"/><rect x="15.4" y="9.2" width="3.2" height="3.2" fill="#5f636b"/><rect x="15.4" y="15.6" width="3.2" height="9.5" fill="#5f636b"/></svg>
<svg style="position:absolute;left:2263.5px;top:1252.0px;" width="34" height="34" viewBox="0 0 34 34"><circle cx="17.0" cy="17.0" r="15.5" fill="none" stroke="#5f636b" stroke-width="2.8"/><rect x="15.4" y="9.2" width="3.2" height="3.2" fill="#5f636b"/><rect x="15.4" y="15.6" width="3.2" height="9.5" fill="#5f636b"/></svg>
<div style="position:absolute;left:2318px;top:1237px;width:222px;height:63px;box-sizing:border-box;border:2px solid #c6c9ce;border-radius:8px;background:#fff;"></div>
<svg style="position:absolute;left:2335px;top:1248px;" width="42" height="42" viewBox="2335 1248 42 42"><path d="M2368.5 1262 V1257.5 Q2368.5 1255.5 2366.5 1255.5 H2343.5 Q2341.5 1255.5 2341.5 1257.5 V1280.5 Q2341.5 1282.5 2343.5 1282.5 H2366.5 Q2368.5 1282.5 2368.5 1280.5 V1276" fill="none" stroke="#1d1f24" stroke-width="3"/><path d="M2347.5 1269 H2368 M2362 1262.8 L2368.3 1269 L2362 1275.2" fill="none" stroke="#1d1f24" stroke-width="3"/></svg>
<div class="t" style="left:2384.0px;top:1255.3px;font-size:28px;color:#1d1f24;letter-spacing:-0.809px;">Export CSV</div>
<div style="position:absolute;left:2558px;top:1236px;width:415px;height:67px;box-sizing:border-box;border:2px solid #dcdee2;border-radius:9px;background:#fff;"></div>
<svg style="position:absolute;left:2570px;top:1250px;" width="40" height="40" viewBox="2570 1250 40 40"><circle cx="2586.5" cy="1266" r="8.8" fill="none" stroke="#9a9da3" stroke-width="3"/><path d="M2593 1272.5 L2604 1283" stroke="#9a9da3" stroke-width="3.4"/></svg>
<div style="position:absolute;left:874px;top:1320px;width:939px;height:82px;background:#eaf4fe;"></div>
<div style="position:absolute;left:1813px;top:1320px;width:1177px;height:82px;background:#f7f7f8;"></div>
<div style="position:absolute;left:874px;top:1320px;width:2116px;height:2px;background:#c8cbd0;"></div>
<div style="position:absolute;left:874px;top:1401px;width:2116px;height:2px;background:#c8cbd0;"></div>
<div style="position:absolute;left:874px;top:1403px;width:939px;height:240px;background:#f5f8fe;"></div>
<div style="position:absolute;left:1813px;top:1403px;width:240px;height:80px;background:#2a76df;"></div>
<div style="position:absolute;left:2053px;top:1403px;width:240px;height:80px;background:#98b8ee;"></div>
<div style="position:absolute;left:2293px;top:1403px;width:240px;height:80px;background:#aac6f1;"></div>
<div style="position:absolute;left:2533px;top:1403px;width:240px;height:80px;background:#c0d5f5;"></div>
<div style="position:absolute;left:2773px;top:1403px;width:217px;height:80px;background:#c3d7f6;"></div>
<div style="position:absolute;left:888px;top:1427px;width:32px;height:32px;background:#1e61f0;border-radius:4px;"></div>
<svg style="position:absolute;left:888px;top:1427px;" width="32" height="32" viewBox="0 0 32 32"><polyline points="7.5,16.5 13.5,22.5 25,10" fill="none" stroke="#fff" stroke-width="3"/></svg>
<svg style="position:absolute;left:944.0px;top:1431.5px;" width="15" height="23" viewBox="0 0 15 23"><polyline points="3,3 12,11.5 3,20" fill="none" stroke="#1d1f24" stroke-width="2.6" stroke-linecap="square"/></svg>
<div style="position:absolute;left:984px;top:1431px;width:24px;height:24px;background:#1e61f0;border-radius:50%;"></div>
<div class="t" style="left:1028.5px;top:1429.7px;font-size:24px;color:#1d1f24;">United States</div>
<div class="t" style="left:1592.0px;top:1429.7px;font-size:24px;color:#1d1f24;letter-spacing:0.2px;">752,517</div>
<div class="t" style="left:1832.0px;top:1429.7px;font-size:24px;color:#fff;letter-spacing:0.870px;">100%</div>
<div class="t" style="left:2072.0px;top:1429.7px;font-size:24px;color:#1d1f24;letter-spacing:0.45px;">52.6% (365328 ...</div>
<div class="t" style="left:2312.0px;top:1429.7px;font-size:24px;color:#1d1f24;letter-spacing:0.45px;">44.2% (280830 ...</div>
<div class="t" style="left:2552.0px;top:1429.7px;font-size:24px;color:#1d1f24;letter-spacing:0.45px;">37.3% (211001 ...</div>
<div class="t" style="left:2792.0px;top:1429.7px;font-size:24px;color:#1d1f24;letter-spacing:0.45px;">31.5% (160038 ...</div>
<div style="position:absolute;left:1813px;top:1483px;width:240px;height:80px;background:#2a76df;"></div>
<div style="position:absolute;left:2053px;top:1483px;width:240px;height:80px;background:#98b8ee;"></div>
<div style="position:absolute;left:2293px;top:1483px;width:240px;height:80px;background:#aac6f1;"></div>
<div style="position:absolute;left:2533px;top:1483px;width:240px;height:80px;background:#c0d5f5;"></div>
<div style="position:absolute;left:2773px;top:1483px;width:217px;height:80px;background:#c3d7f6;"></div>
<div style="position:absolute;left:888px;top:1507px;width:32px;height:32px;background:#1e61f0;border-radius:4px;"></div>
<svg style="position:absolute;left:888px;top:1507px;" width="32" height="32" viewBox="0 0 32 32"><polyline points="7.5,16.5 13.5,22.5 25,10" fill="none" stroke="#fff" stroke-width="3"/></svg>
<svg style="position:absolute;left:944.0px;top:1511.5px;" width="15" height="23" viewBox="0 0 15 23"><polyline points="3,3 12,11.5 3,20" fill="none" stroke="#1d1f24" stroke-width="2.6" stroke-linecap="square"/></svg>
<div style="position:absolute;left:984px;top:1511px;width:24px;height:24px;background:#93b82f;border-radius:50%;"></div>
<div class="t" style="left:1028.5px;top:1509.7px;font-size:24px;color:#1d1f24;">United Kingdom</div>
<div class="t" style="left:1592.0px;top:1509.7px;font-size:24px;color:#1d1f24;letter-spacing:0.2px;">150,991</div>
<div class="t" style="left:1832.0px;top:1509.7px;font-size:24px;color:#fff;letter-spacing:0.870px;">100%</div>
<div class="t" style="left:2072.0px;top:1509.7px;font-size:24px;color:#1d1f24;letter-spacing:0.45px;">52.3% (72981 U...</div>
<div class="t" style="left:2312.0px;top:1509.7px;font-size:24px;color:#1d1f24;letter-spacing:0.45px;">43.7% (55659 U...</div>
<div class="t" style="left:2552.0px;top:1509.7px;font-size:24px;color:#1d1f24;letter-spacing:0.45px;">36.8% (41626 U...</div>
<div class="t" style="left:2792.0px;top:1509.7px;font-size:24px;color:#1d1f24;letter-spacing:0.45px;">31.1% (31753 U...</div>
<div style="position:absolute;left:1813px;top:1563px;width:240px;height:80px;background:#2a76df;"></div>
<div style="position:absolute;left:2053px;top:1563px;width:240px;height:80px;background:#98b8ee;"></div>
<div style="position:absolute;left:2293px;top:1563px;width:240px;height:80px;background:#aac6f1;"></div>
<div style="position:absolute;left:2533px;top:1563px;width:240px;height:80px;background:#c0d5f5;"></div>
<div style="position:absolute;left:2773px;top:1563px;width:217px;height:80px;background:#c3d7f6;"></div>
<div style="position:absolute;left:888px;top:1587px;width:32px;height:32px;background:#1e61f0;border-radius:4px;"></div>
<svg style="position:absolute;left:888px;top:1587px;" width="32" height="32" viewBox="0 0 32 32"><polyline points="7.5,16.5 13.5,22.5 25,10" fill="none" stroke="#fff" stroke-width="3"/></svg>
<svg style="position:absolute;left:944.0px;top:1591.5px;" width="15" height="23" viewBox="0 0 15 23"><polyline points="3,3 12,11.5 3,20" fill="none" stroke="#1d1f24" stroke-width="2.6" stroke-linecap="square"/></svg>
<div style="position:absolute;left:984px;top:1591px;width:24px;height:24px;background:#7e3cc4;border-radius:50%;"></div>
<div class="t" style="left:1028.5px;top:1589.7px;font-size:24px;color:#1d1f24;">Germany</div>
<div class="t" style="left:1592.0px;top:1589.7px;font-size:24px;color:#1d1f24;letter-spacing:0.2px;">150,582</div>
<div class="t" style="left:1832.0px;top:1589.7px;font-size:24px;color:#fff;letter-spacing:0.870px;">100%</div>
<div class="t" style="left:2072.0px;top:1589.7px;font-size:24px;color:#1d1f24;letter-spacing:0.45px;">52.4% (72775 U...</div>
<div class="t" style="left:2312.0px;top:1589.7px;font-size:24px;color:#1d1f24;letter-spacing:0.45px;">44.0% (55765 U...</div>
<div class="t" style="left:2552.0px;top:1589.7px;font-size:24px;color:#1d1f24;letter-spacing:0.45px;">37.0% (41634 U...</div>
<div class="t" style="left:2792.0px;top:1589.7px;font-size:24px;color:#1d1f24;letter-spacing:0.45px;">31.3% (31783 U...</div>
<div style="position:absolute;left:874px;top:1482px;width:939px;height:2px;background:#dfe2e7;"></div>
<div style="position:absolute;left:1813px;top:1482px;width:1177px;height:2px;background:#e4e9f1;"></div>
<div style="position:absolute;left:874px;top:1562px;width:939px;height:2px;background:#dfe2e7;"></div>
<div style="position:absolute;left:1813px;top:1562px;width:1177px;height:2px;background:#e4e9f1;"></div>
<div style="position:absolute;left:932px;top:1320px;width:2px;height:320px;background:#dcdee2;"></div>
<div style="position:absolute;left:1332px;top:1320px;width:2px;height:320px;background:#dcdee2;"></div>
<div style="position:absolute;left:1572px;top:1320px;width:2px;height:320px;background:#dcdee2;"></div>
<div style="position:absolute;left:1812px;top:1320px;width:2px;height:320px;background:#c8cbd0;"></div>
<div style="position:absolute;left:2052px;top:1320px;width:2px;height:82px;background:#dcdee2;"></div>
<div style="position:absolute;left:2052px;top:1403px;width:2px;height:240px;background:#d3dbe8;"></div>
<div style="position:absolute;left:2292px;top:1320px;width:2px;height:82px;background:#dcdee2;"></div>
<div style="position:absolute;left:2292px;top:1403px;width:2px;height:240px;background:#d3dbe8;"></div>
<div style="position:absolute;left:2532px;top:1320px;width:2px;height:82px;background:#dcdee2;"></div>
<div style="position:absolute;left:2532px;top:1403px;width:2px;height:240px;background:#d3dbe8;"></div>
<div style="position:absolute;left:2772px;top:1320px;width:2px;height:82px;background:#dcdee2;"></div>
<div style="position:absolute;left:2772px;top:1403px;width:2px;height:240px;background:#d3dbe8;"></div>
<div style="position:absolute;left:887px;top:1345px;width:32px;height:32px;background:#1e61f0;border-radius:4px;"></div>
<div style="position:absolute;left:895px;top:1359.5px;width:16px;height:2.6px;background:#fff;"></div>
<svg style="position:absolute;left:955.0px;top:1346.0px;" width="30" height="30" viewBox="0 0 64 64"><circle cx="32" cy="32" r="32" fill="#1e61f0"/><path d="M9 30.5 H55" stroke="#fff" stroke-width="3.2" fill="none" stroke-linecap="round"/><path d="M15.5 42.5 L25.2 13.5 Q27.3 8.2 29.6 13.6 L40.6 46.8 Q43.6 54.2 46.8 46.6 L51.2 35.5" stroke="#fff" stroke-width="3.2" fill="none" stroke-linecap="round" stroke-linejoin="round"/></svg>
<div class="t m" style="left:999.0px;top:1348.7px;font-size:24px;color:#1d1f24;letter-spacing:0.326px;">Country</div>
<svg style="position:absolute;left:1103px;top:1348px;" width="14" height="26" viewBox="0 0 14 26"><path d="M6.6 2.7 L12.9 8.8 H0.3 Z" fill="#b3b6bb"/><path d="M6.6 23.4 L12.9 16.8 H0.3 Z" fill="#b3b6bb"/></svg>
<div class="t m" style="left:1351.0px;top:1348.7px;font-size:24px;color:#1d1f24;letter-spacing:-0.234px;">Date</div>
<svg style="position:absolute;left:1419px;top:1348px;" width="14" height="26" viewBox="0 0 14 26"><path d="M6.6 2.7 L12.9 8.8 H0.3 Z" fill="#b3b6bb"/><path d="M6.6 23.4 L12.9 16.8 H0.3 Z" fill="#b3b6bb"/></svg>
<div class="t m" style="left:1590.0px;top:1348.7px;font-size:24px;color:#1d1f24;letter-spacing:-0.168px;">Users</div>
<svg style="position:absolute;left:1670px;top:1348px;" width="14" height="26" viewBox="0 0 14 26"><path d="M6.6 2.7 L12.9 8.8 H0.3 Z" fill="#b3b6bb"/><path d="M6.6 23.4 L12.9 16.8 H0.3 Z" fill="#b3b6bb"/></svg>
<div style="position:absolute;left:1328px;top:1348px;width:5px;height:24px;background:#d5d8dc;border-radius:1px;"></div>
<div style="position:absolute;left:1568px;top:1348px;width:5px;height:24px;background:#d5d8dc;border-radius:1px;"></div>
<div style="position:absolute;left:1808px;top:1348px;width:5px;height:24px;background:#d5d8dc;border-radius:1px;"></div>
<div class="t m" style="left:1831.0px;top:1348.7px;font-size:24px;color:#1d1f24;letter-spacing:-0.068px;">Week 0</div>
<svg style="position:absolute;left:1929.7px;top:1348px;" width="14" height="26" viewBox="0 0 14 26"><path d="M6.6 2.7 L12.9 8.8 H0.3 Z" fill="#b3b6bb"/><path d="M6.6 23.4 L12.9 16.8 H0.3 Z" fill="#b3b6bb"/></svg>
<div class="t m" style="left:2071.0px;top:1348.7px;font-size:24px;color:#1d1f24;letter-spacing:-0.068px;">Week 1</div>
<svg style="position:absolute;left:2169.7px;top:1348px;" width="14" height="26" viewBox="0 0 14 26"><path d="M6.6 2.7 L12.9 8.8 H0.3 Z" fill="#b3b6bb"/><path d="M6.6 23.4 L12.9 16.8 H0.3 Z" fill="#b3b6bb"/></svg>
<div class="t m" style="left:2311.0px;top:1348.7px;font-size:24px;color:#1d1f24;letter-spacing:-0.068px;">Week 2</div>
<svg style="position:absolute;left:2409.7px;top:1348px;" width="14" height="26" viewBox="0 0 14 26"><path d="M6.6 2.7 L12.9 8.8 H0.3 Z" fill="#b3b6bb"/><path d="M6.6 23.4 L12.9 16.8 H0.3 Z" fill="#b3b6bb"/></svg>
<div class="t m" style="left:2551.0px;top:1348.7px;font-size:24px;color:#1d1f24;letter-spacing:-0.068px;">Week 3</div>
<svg style="position:absolute;left:2649.7px;top:1348px;" width="14" height="26" viewBox="0 0 14 26"><path d="M6.6 2.7 L12.9 8.8 H0.3 Z" fill="#b3b6bb"/><path d="M6.6 23.4 L12.9 16.8 H0.3 Z" fill="#b3b6bb"/></svg>
<div class="t m" style="left:2791.0px;top:1348.7px;font-size:24px;color:#1d1f24;letter-spacing:-0.068px;">Week 4</div>
<svg style="position:absolute;left:2889.7px;top:1348px;" width="14" height="26" viewBox="0 0 14 26"><path d="M6.6 2.7 L12.9 8.8 H0.3 Z" fill="#b3b6bb"/><path d="M6.6 23.4 L12.9 16.8 H0.3 Z" fill="#b3b6bb"/></svg>
<div style="position:absolute;left:2990px;top:1320px;width:2px;height:320px;background:#c6c8cc;"></div>
<div style="position:absolute;left:933px;top:1562px;width:400px;height:80px;box-sizing:border-box;border:2px solid #3d8ae6;"></div>
<div style="position:absolute;left:2888px;top:1495px;width:96px;height:96px;background:#1e61f0;border-radius:50%;box-shadow:0 0 2px rgba(0,0,0,0.15);"></div>
<svg style="position:absolute;left:2912.0px;top:1519.0px;" width="48" height="48" viewBox="0 0 64 64"><circle cx="32" cy="32" r="32" fill="#fff"/><path d="M9 30.5 H55" stroke="#1e61f0" stroke-width="3.2" fill="none" stroke-linecap="round"/><path d="M15.5 42.5 L25.2 13.5 Q27.3 8.2 29.6 13.6 L40.6 46.8 Q43.6 54.2 46.8 46.6 L51.2 35.5" stroke="#1e61f0" stroke-width="3.2" fill="none" stroke-linecap="round" stroke-linejoin="round"/></svg>
<svg style="position:absolute;left:0px;top:1609px;" width="22" height="22" viewBox="0 0 22 22"><path d="M0 0 V22 H22 Q0 22 0 0 Z" fill="#a4a7ae"/><path d="M0 0 Q0 22 22 22" fill="none" stroke="#111" stroke-width="1.6"/></svg>
<svg style="position:absolute;left:3002px;top:1609px;" width="22" height="22" viewBox="0 0 22 22"><path d="M22 0 V22 H0 Q22 22 22 0 Z" fill="#a4a7ae"/><path d="M22 0 Q22 22 0 22" fill="none" stroke="#111" stroke-width="1.6"/></svg>
</div>
</body></html>
